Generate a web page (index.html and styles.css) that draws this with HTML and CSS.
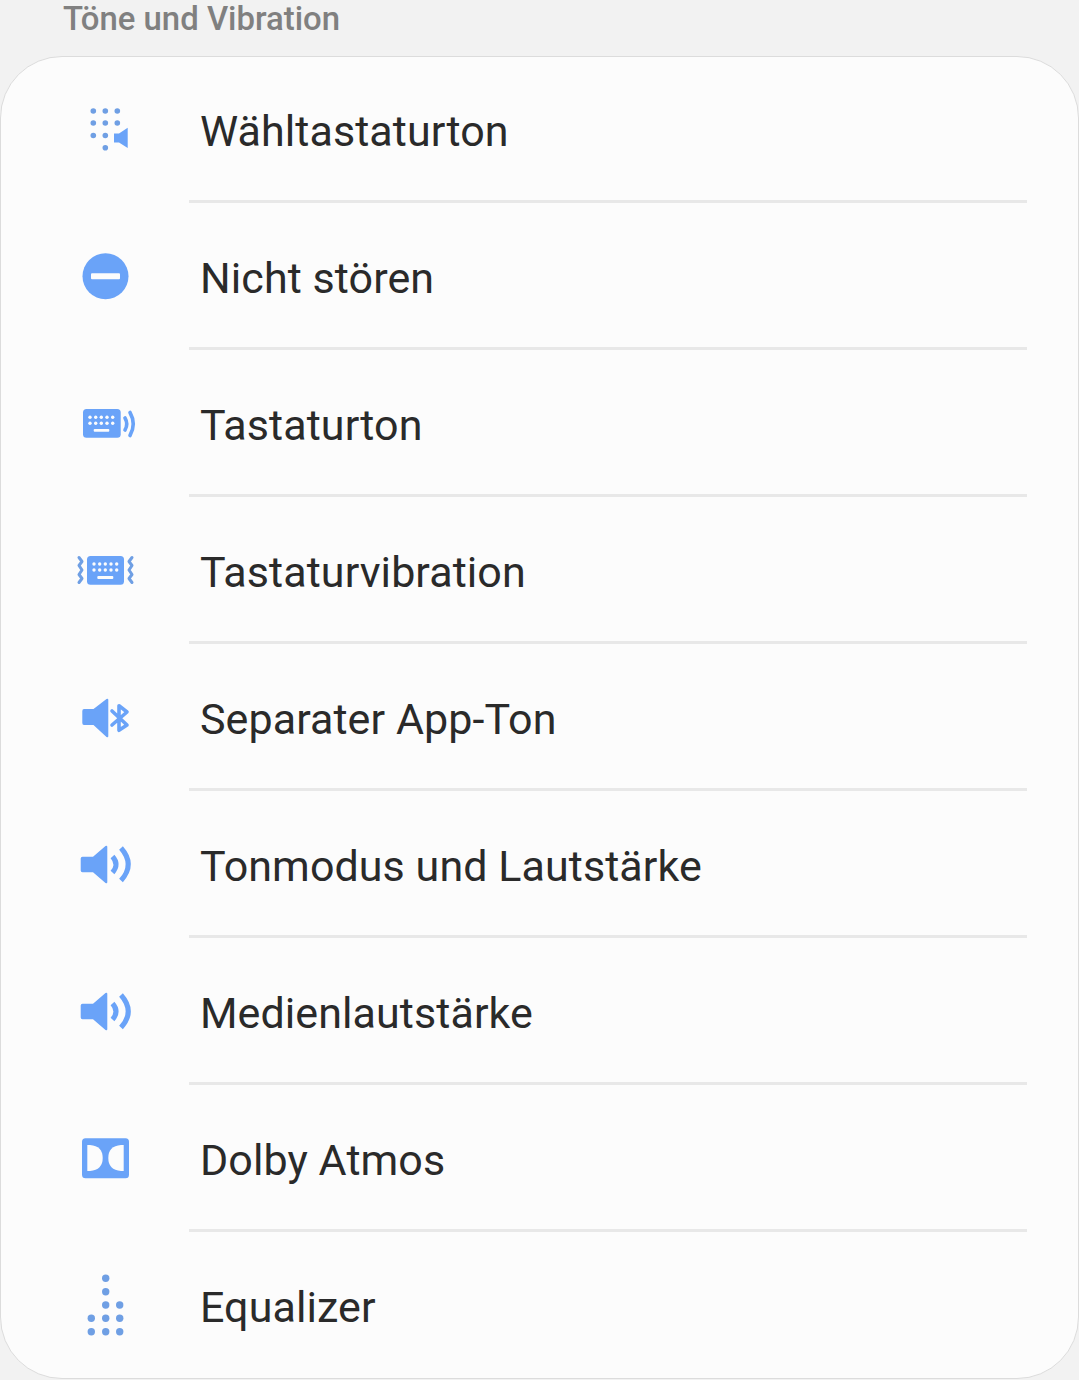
FILE: index.html
```html
<!DOCTYPE html>
<html lang="de">
<head>
<meta charset="utf-8">
<title>Töne und Vibration</title>
<link rel="stylesheet" href="styles.css">
</head>
<body>
<h2 class="section-title">Töne und Vibration</h2>
<section class="card">
  <div class="row">
    <svg class="icon" viewBox="0 0 70 60">
      <g class="dots-dim">
        <circle cx="18.3" cy="11" r="2.8"/><circle cx="30.3" cy="11" r="2.8"/><circle cx="42.3" cy="11" r="2.8"/>
        <circle cx="18.3" cy="23" r="2.8"/><circle cx="30.3" cy="23" r="2.8"/><circle cx="42.3" cy="23" r="2.8"/>
        <circle cx="18.3" cy="35.5" r="2.8"/><circle cx="30.3" cy="35.5" r="2.8"/>
        <circle cx="30.3" cy="47.7" r="2.8"/>
      </g>
      <path class="fill" d="M39 33.5H44L52.7 27.7V48L44 42.5H39Z"/>
    </svg>
    <span class="label">Wähltastaturton</span>
  </div>
  <hr class="rule">
  <div class="row">
    <svg class="icon" viewBox="0 0 70 60">
      <circle class="fill" cx="30.5" cy="29.3" r="23"/>
      <rect class="knock" x="16" y="26.3" width="29" height="6" rx="1"/>
    </svg>
    <span class="label">Nicht stören</span>
  </div>
  <hr class="rule">
  <div class="row">
    <svg class="icon" viewBox="0 0 70 60">
      <rect class="fill" x="8" y="15" width="37.7" height="28.7" rx="3.5"/>
      <g class="knock">
        <circle cx="15" cy="23.3" r="1.7"/><circle cx="20.7" cy="23.3" r="1.7"/><circle cx="26.3" cy="23.3" r="1.7"/><circle cx="32" cy="23.3" r="1.7"/><circle cx="37.7" cy="23.3" r="1.7"/>
        <circle cx="15" cy="29.3" r="1.7"/><circle cx="20.7" cy="29.3" r="1.7"/><circle cx="26.3" cy="29.3" r="1.7"/><circle cx="32" cy="29.3" r="1.7"/><circle cx="37.7" cy="29.3" r="1.7"/>
        <rect x="18.7" y="35" width="15.6" height="2.7" rx="1"/>
      </g>
      <path class="line-thick" d="M50 24Q53.5 30 50 36"/>
      <path class="line-thick" d="M55 18.5Q61.5 30 55 41.5"/>
    </svg>
    <span class="label">Tastaturton</span>
  </div>
  <hr class="rule">
  <div class="row">
    <svg class="icon" viewBox="0 0 70 60">
      <rect class="fill" x="12" y="15" width="37" height="28.7" rx="3.5"/>
      <g class="knock">
        <circle cx="19" cy="23" r="1.7"/><circle cx="24.7" cy="23" r="1.7"/><circle cx="30.3" cy="23" r="1.7"/><circle cx="36" cy="23" r="1.7"/><circle cx="41.7" cy="23" r="1.7"/>
        <circle cx="19" cy="29" r="1.7"/><circle cx="24.7" cy="29" r="1.7"/><circle cx="30.3" cy="29" r="1.7"/><circle cx="36" cy="29" r="1.7"/><circle cx="41.7" cy="29" r="1.7"/>
        <rect x="22.3" y="35" width="16" height="3" rx="1"/>
      </g>
      <path class="line-dim" d="M4 16.5L7 20.5L4 24.5L7 29L4 33.5L7 37.5L4 41.5"/>
      <path class="line-dim" d="M57 16.5L54 20.5L57 24.5L54 29L57 33.5L54 37.5L57 41.5"/>
    </svg>
    <span class="label">Tastaturvibration</span>
  </div>
  <hr class="rule">
  <div class="row">
    <svg class="icon" viewBox="0 0 70 60">
      <path class="fill" d="M9 21H18.5L31.5 11Q33.3 10 33.3 12V48Q33.3 50 31.5 49L18.5 37H9Q7.3 37 7.3 35V23Q7.3 21 9 21Z"/>
      <path class="line-thick" d="M37 23L52 37L44 42.3V17.7L52 24L37 37"/>
    </svg>
    <span class="label">Separater App-Ton</span>
  </div>
  <hr class="rule">
  <div class="row">
    <svg class="icon" viewBox="0 0 70 60">
      <path class="fill" d="M7.5 21.7H18L30.5 11Q32.3 10 32.3 12V47Q32.3 49 30.5 48L18 37.3H7.5Q5.7 37.3 5.7 35.5V23.5Q5.7 21.7 7.5 21.7Z"/>
      <path class="line-heavy" d="M37.5 21.5Q44.5 29.5 37.5 37.5"/>
      <path class="line-heavy" d="M46 13Q60.5 29.5 46 45.5"/>
    </svg>
    <span class="label">Tonmodus und Lautstärke</span>
  </div>
  <hr class="rule">
  <div class="row">
    <svg class="icon" viewBox="0 0 70 60">
      <path class="fill" d="M7.5 21.7H18L30.5 11Q32.3 10 32.3 12V47Q32.3 49 30.5 48L18 37.3H7.5Q5.7 37.3 5.7 35.5V23.5Q5.7 21.7 7.5 21.7Z"/>
      <path class="line-heavy" d="M37.5 21.5Q44.5 29.5 37.5 37.5"/>
      <path class="line-heavy" d="M46 13Q60.5 29.5 46 45.5"/>
    </svg>
    <span class="label">Medienlautstärke</span>
  </div>
  <hr class="rule">
  <div class="row">
    <svg class="icon" viewBox="0 0 70 60">
      <rect class="fill" x="7" y="9.3" width="47" height="40" rx="3.5"/>
      <path class="knock" d="M12.3 16H15Q27.7 17 27.7 29Q27.7 41 15 42H12.3Z"/>
      <path class="knock" d="M48.7 16H46Q33.3 17 33.3 29Q33.3 41 46 42H48.7Z"/>
    </svg>
    <span class="label">Dolby Atmos</span>
  </div>
  <hr class="rule">
  <div class="row">
    <svg class="icon" viewBox="0 0 70 60">
      <g class="dots-dim">
        <circle cx="30.7" cy="2.3" r="3.7"/><circle cx="30.7" cy="15.7" r="3.7"/><circle cx="30.7" cy="29" r="3.7"/><circle cx="30.7" cy="42.3" r="3.7"/><circle cx="30.7" cy="55.7" r="3.7"/>
        <circle cx="44.7" cy="29" r="3.7"/><circle cx="44.7" cy="42.3" r="3.7"/><circle cx="44.7" cy="55.7" r="3.7"/>
        <circle cx="16.3" cy="42.3" r="3.7"/><circle cx="16.3" cy="55.7" r="3.7"/>
      </g>
    </svg>
    <span class="label">Equalizer</span>
  </div>
</section>
</body>
</html>
```

FILE: styles.css
```css
* { box-sizing: border-box; }
html, body { margin: 0; padding: 0; }
body {
  height: 1380px;
  overflow: hidden;
  background: #f2f2f2;
  font-family: Roboto, "Liberation Sans", sans-serif;
}
.section-title {
  height: 56px;
  margin: 0;
  padding-left: 63px;
  font-size: 32.9px;
  font-weight: 500;
  line-height: 38px;
  color: #808080;
}
.card {
  height: 1323px;
  background: #fcfcfc;
  border: 1px solid #dcdcdc;
  border-radius: 62px;
}
.row {
  display: flex;
  align-items: center;
  height: 143px;
  padding-left: 74px;
}
.icon {
  flex: none;
  width: 70px;
  height: 60px;
  margin-right: 55px;
  margin-top: 2px;
  overflow: visible;
}
.label {
  padding-top: 5px;
  font-size: 43px;
  line-height: 50px;
  letter-spacing: 0.08px;
  color: #2a2a2a;
}
.rule {
  height: 3px;
  margin: 0 51px 1px 188px;
  border: 0;
  background: #e8e8e8;
}
.fill { fill: #6aa3f8; }
.knock { fill: #fcfcfc; }
.dots-dim { fill: #6f9fe4; }
.line-dim, .line-thick, .line-heavy {
  fill: none;
  stroke-linejoin: round;
}
.line-dim { stroke: #6f9fe4; stroke-width: 3; stroke-linecap: round; }
.line-thick { stroke: #6aa3f8; stroke-width: 3.6; stroke-linecap: round; }
.line-heavy { stroke: #6aa3f8; stroke-width: 5; }
```
